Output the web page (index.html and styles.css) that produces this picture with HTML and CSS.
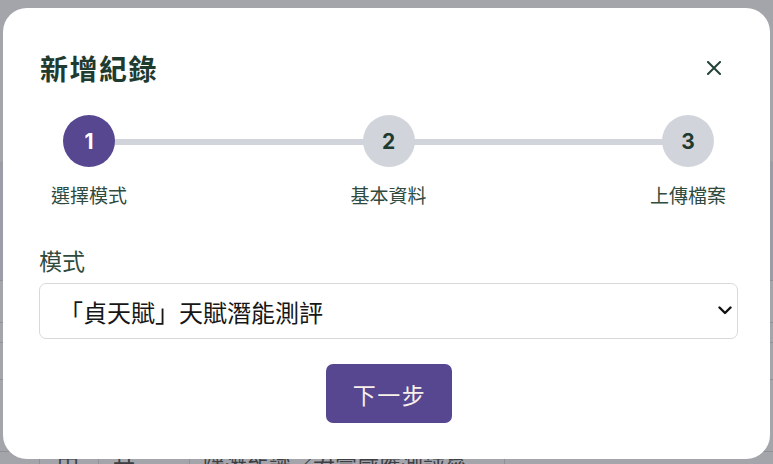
FILE: index.html
```html
<!DOCTYPE html>
<html lang="zh-Hant">
<head>
<meta charset="utf-8">
<title>新增紀錄</title>
<link rel="stylesheet" href="styles.css">
</head>
<body>
<div class="backdrop">
  <div class="bg-row bg-top"></div>
  <div class="bg-row bg-band"></div>
  <div class="bg-row bg-r1"></div>
  <div class="bg-row bg-r2"></div>
  <div class="bg-row bg-r3"></div>
  <div class="bg-row bg-r4"></div>
  <div class="bg-row bg-last">
    <span class="bg-cell c1"></span>
    <span class="bg-cell c2">田</span>
    <span class="bg-cell c3">廿</span>
    <span class="bg-cell c4">隱潛能識／君富感應測評參</span>
    <span class="bg-cell c5"></span>
  </div>
</div>

<div class="modal" role="dialog" aria-labelledby="modal-title">
  <div class="modal-header">
    <h2 id="modal-title" class="modal-title">新增紀錄</h2>
    <button class="close-btn" type="button" aria-label="關閉">
      <svg width="14" height="14" viewBox="0 0 14 14"><path d="M1 1 L13 13 M13 1 L1 13" stroke="currentColor" stroke-width="2" stroke-linecap="square"/></svg>
    </button>
  </div>

  <div class="steps">
    <div class="step active">
      <div class="step-circle">1</div>
      <div class="step-label">選擇模式</div>
    </div>
    <div class="step">
      <div class="step-circle">2</div>
      <div class="step-label">基本資料</div>
    </div>
    <div class="step">
      <div class="step-circle">3</div>
      <div class="step-label">上傳檔案</div>
    </div>
  </div>

  <div class="field">
    <label class="field-label" for="mode">模式</label>
    <div class="select-wrap">
      <select id="mode" class="select">
        <option>「貞天賦」天賦潛能測評</option>
      </select>
      <svg class="chevron" width="14" height="9" viewBox="0 0 14 9"><path d="M1.5 1.5 L7 7 L12.5 1.5" fill="none" stroke="#111" stroke-width="2.4" stroke-linecap="round" stroke-linejoin="round"/></svg>
    </div>
  </div>

  <div class="actions">
    <button class="btn-primary" type="button">下一步</button>
  </div>
</div>
</body>
</html>
```

FILE: styles.css
```css
* { box-sizing: border-box; }

html, body {
  margin: 0;
  padding: 0;
  width: 773px;
  height: 464px;
  overflow: hidden;
}

body {
  font-family: "Noto Sans CJK TC", "Noto Sans", sans-serif;
  background: #a3a5aa;
  position: relative;
}

/* dimmed page behind the dialog */
.backdrop {
  display: flex;
  flex-direction: column;
  height: 464px;
  overflow: hidden;
}
.bg-row { flex-shrink: 0; border-bottom: 1px solid #8f9196; }
.bg-top { height: 162px; background: #a3a5aa; border-bottom-color: #a0a2a8; }
.bg-band { height: 119px; background: #9b9ca6; }
.bg-r1 { height: 42px; background: #a4a5aa; }
.bg-r2 { height: 20px; background: #a4a5aa; }
.bg-r3 { height: 37px; background: #a4a5aa; }
.bg-r4 { height: 72px; background: #a4a5aa; }
.bg-last {
  display: flex;
  height: 40px;
  background: #a4a5aa;
  border-bottom: none;
}
.bg-cell {
  border-right: 1px solid #8f9196;
  padding-top: 2px;
  font-size: 22px;
  line-height: 22px;
  color: #3e3f43;
  white-space: nowrap;
  overflow: hidden;
}
.c1 { width: 40px; }
.c2 { width: 59px; padding-left: 17px; }
.c3 { width: 91px; padding-left: 14px; }
.c4 { width: 315px; padding-left: 13px; }
.c5 { flex: 1; border-right: none; }

/* dialog */
.modal {
  position: absolute;
  left: 3px;
  top: 8px;
  width: 767px;
  height: 451px;
  background: #ffffff;
  border-radius: 24px;
  padding: 40px 32px 0 36px;
}

.modal-header {
  display: flex;
  align-items: center;
  justify-content: space-between;
  height: 40px;
}
.modal-title {
  margin: 0 0 0 1px;
  font-size: 28px;
  line-height: 40px;
  font-weight: 700;
  color: #1f3b2f;
  letter-spacing: 1.5px;
}
.close-btn {
  width: 32px;
  height: 32px;
  margin-right: 8px;
  padding: 0;
  border: none;
  background: transparent;
  color: #24443a;
  display: flex;
  align-items: center;
  justify-content: center;
}

.steps {
  position: relative;
  display: flex;
  justify-content: space-between;
  margin-top: 27px;
}
.steps::before {
  content: "";
  position: absolute;
  left: 50px;
  right: 50px;
  top: 24px;
  height: 6px;
  background: #d1d5db;
}
.step {
  position: relative;
  width: 100px;
  display: flex;
  flex-direction: column;
  align-items: center;
}
.step-circle {
  width: 52px;
  height: 52px;
  border-radius: 50%;
  background: #d1d5db;
  color: #1f3b2f;
  display: flex;
  align-items: center;
  justify-content: center;
  font-family: "Inter", "Roboto", sans-serif;
  font-size: 21px;
  font-weight: 700;
}
.step.active .step-circle {
  background: #574791;
  color: #ffffff;
}
.step-label {
  margin-top: 15px;
  font-size: 19px;
  line-height: 26px;
  color: #2f4a3e;
  white-space: nowrap;
}

.field {
  margin-top: 36px;
}
.field-label {
  display: block;
  font-size: 23px;
  line-height: 32px;
  color: #2f4a3e;
}
.select-wrap {
  position: relative;
  margin-top: 7px;
}
.select {
  appearance: none;
  -webkit-appearance: none;
  display: block;
  width: 699px;
  height: 56px;
  padding: 0 40px 0 19px;
  border: 1px solid #d9d9d9;
  border-radius: 7px;
  background: #ffffff;
  font-family: "Noto Sans CJK TC", "Noto Sans", sans-serif;
  font-size: 24px;
  color: #161616;
}
.chevron {
  position: absolute;
  left: 679px;
  top: 23px;
  pointer-events: none;
}

.actions {
  display: flex;
  justify-content: center;
  margin-top: 25px;
}
.btn-primary {
  width: 126px;
  height: 59px;
  border: none;
  border-radius: 7px;
  background: #574791;
  color: #f7f1ea;
  font-family: "Noto Sans CJK TC", "Noto Sans", sans-serif;
  font-size: 23px;
  font-weight: 400;
  letter-spacing: 1.5px;
  padding-left: 8px;
}
```
